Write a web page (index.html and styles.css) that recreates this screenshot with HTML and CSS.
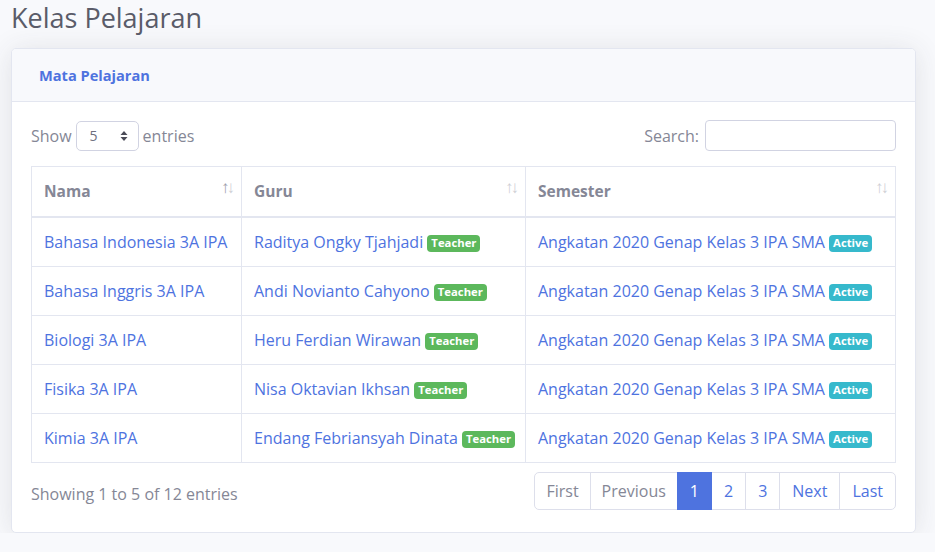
FILE: index.html
```html
<!DOCTYPE html>
<html lang="id">
<head>
<meta charset="utf-8">
<title>Kelas Pelajaran</title>
<link rel="stylesheet" href="styles.css">
</head>
<body>
<div class="page">
  <h1 class="title">Kelas Pelajaran</h1>
  <div class="card">
    <div class="card-header">Mata Pelajaran</div>
    <div class="card-body">
      <div class="controls">
        <label class="length">Show
          <span class="select"><span class="select-val">5</span>
            <svg class="select-caret" width="8" height="12" viewBox="0 0 8 12"><path d="M4 1 L7.5 5 H0.5 Z M4 11 L7.5 7 H0.5 Z" fill="#4a4b57"/></svg>
          </span>
          entries</label>
        <label class="search">Search: <input type="text" class="search-input"></label>
      </div>
      <table class="table">
        <colgroup><col class="c1"><col class="c2"><col class="c3"></colgroup>
        <thead>
          <tr>
            <th>Nama<span class="sort"><span class="up on">↑</span><span class="dn">↓</span></span></th>
            <th>Guru<span class="sort"><span class="up">↑</span><span class="dn">↓</span></span></th>
            <th>Semester<span class="sort"><span class="up">↑</span><span class="dn">↓</span></span></th>
          </tr>
        </thead>
        <tbody>
          <tr>
            <td><a href="#">Bahasa Indonesia 3A IPA</a></td>
            <td><a href="#">Raditya Ongky Tjahjadi</a> <span class="badge green">Teacher</span></td>
            <td><a href="#">Angkatan 2020 Genap Kelas 3 IPA SMA</a> <span class="badge teal">Active</span></td>
          </tr>
          <tr>
            <td><a href="#">Bahasa Inggris 3A IPA</a></td>
            <td><a href="#">Andi Novianto Cahyono</a> <span class="badge green">Teacher</span></td>
            <td><a href="#">Angkatan 2020 Genap Kelas 3 IPA SMA</a> <span class="badge teal">Active</span></td>
          </tr>
          <tr>
            <td><a href="#">Biologi 3A IPA</a></td>
            <td><a href="#">Heru Ferdian Wirawan</a> <span class="badge green">Teacher</span></td>
            <td><a href="#">Angkatan 2020 Genap Kelas 3 IPA SMA</a> <span class="badge teal">Active</span></td>
          </tr>
          <tr>
            <td><a href="#">Fisika 3A IPA</a></td>
            <td><a href="#">Nisa Oktavian Ikhsan</a> <span class="badge green">Teacher</span></td>
            <td><a href="#">Angkatan 2020 Genap Kelas 3 IPA SMA</a> <span class="badge teal">Active</span></td>
          </tr>
          <tr>
            <td><a href="#">Kimia 3A IPA</a></td>
            <td><a href="#">Endang Febriansyah Dinata</a> <span class="badge green">Teacher</span></td>
            <td><a href="#">Angkatan 2020 Genap Kelas 3 IPA SMA</a> <span class="badge teal">Active</span></td>
          </tr>
        </tbody>
      </table>
      <div class="footer">
        <div class="info">Showing 1 to 5 of 12 entries</div>
        <ul class="pagination">
          <li class="pg disabled">First</li>
          <li class="pg disabled">Previous</li>
          <li class="pg num active">1</li>
          <li class="pg num">2</li>
          <li class="pg num">3</li>
          <li class="pg">Next</li>
          <li class="pg">Last</li>
        </ul>
      </div>
    </div>
  </div>
</div>
</body>
</html>
```
FILE: styles.css
```css
* { box-sizing: border-box; }
html, body {
  margin: 0;
  background: #f8f9fc;
  font-family: "Open Sans", "Noto Sans", sans-serif;
  font-size: 16px;
  color: #858796;
}
.page {
  padding: 0 19px 0 11px;
}
.title {
  margin: 0 0 13px;
  padding-top: 1px;
  font-size: 27px;
  line-height: 34px;
  font-weight: 400;
  color: #5a5c69;
}
.card {
  background: #fff;
  border: 1px solid #e3e6f0;
  border-radius: 5px;
  box-shadow: 0 2px 28px 0 rgba(58, 59, 69, 0.12);
  overflow: hidden;
}
.card-header {
  background: #f8f9fc;
  border-bottom: 1px solid #e3e6f0;
  padding: 15px 27px;
  line-height: 22px;
  font-size: 14.6px;
  font-weight: 700;
  color: #4e73df;
}
.card-body {
  padding: 19px 19px 22px;
}
.controls {
  display: flex;
  justify-content: space-between;
  align-items: center;
  height: 31px;
  margin-bottom: 14px;
}
.length, .search {
  display: flex;
  align-items: center;
  gap: 4px;
  font-size: 16px;
  line-height: 24px;
  color: #858796;
  position: relative;
  top: -1px;
}
.select {
  display: inline-flex;
  align-items: center;
  justify-content: space-between;
  width: 63px;
  height: 30px;
  padding: 0 10px 0 13px;
  border: 1px solid #d1d3e2;
  border-radius: 5px;
  font-size: 14px;
  color: #6e707e;
}
.search-input {
  width: 191px;
  height: 31px;
  border: 1px solid #d1d3e2;
  border-radius: 4px;
  margin: 0 0 0 2px;
  padding: 0 8px;
}
.table {
  width: 100%;
  table-layout: fixed;
  border-collapse: collapse;
  border: 1px solid #e3e6f0;
}
.table th, .table td {
  border: 1px solid #e3e6f0;
  padding: 12px 12px;
  line-height: 24px;
  text-align: left;
  vertical-align: middle;
  white-space: nowrap;
  overflow: visible;
  font-size: 16px;
}
.table th {
  position: relative;
  border-bottom: 2px solid #e3e6f0;
  font-weight: 700;
  font-size: 15.5px;
  color: #858796;
  padding-top: 12px;
  padding-bottom: 13px;
}
.c1 { width: 210px; }
.c2 { width: 284px; }
.sort {
  position: absolute;
  right: 9px;
  top: 8px;
  font-size: 17px;
  font-weight: 400;
  letter-spacing: -3px;
  color: #858796;
}
.sort span { opacity: 0.4; }
.sort span.on { opacity: 0.8; }
.table a {
  color: #4e73df;
  text-decoration: none;
}
.badge {
  display: inline-block;
  padding: 2px 4px 3px;
  font-size: 11.3px;
  font-weight: 700;
  line-height: 12px;
  border-radius: 4px;
  color: #fff;
  vertical-align: 1px;
}
.badge.green { background: #5cb85c; }
.badge.teal { background: #36b9cc; }
.footer {
  display: flex;
  justify-content: space-between;
  align-items: flex-start;
  margin-top: 9px;
}
.info {
  margin-top: 10px;
  font-size: 16px;
  line-height: 24px;
  color: #858796;
}
.pagination {
  display: flex;
  list-style: none;
  margin: 0;
  padding: 0;
}
.pg {
  padding: 8px 12px;
  line-height: 20px;
  font-size: 16px;
  color: #4e73df;
  background: #fff;
  border: 1px solid #dddfeb;
  margin-left: -1px;
}
.pg.disabled { padding: 8px 11px; color: #858796; }
.pg.num { padding: 8px 12px; min-width: 35px; text-align: center; }
.pg:first-child {
  margin-left: 0;
  border-radius: 5px 0 0 5px;
}
.pg:last-child { border-radius: 0 5px 5px 0; }
.pg.active {
  background: #4e73df;
  border-color: #4e73df;
  color: #fff;
  position: relative;
}
```
